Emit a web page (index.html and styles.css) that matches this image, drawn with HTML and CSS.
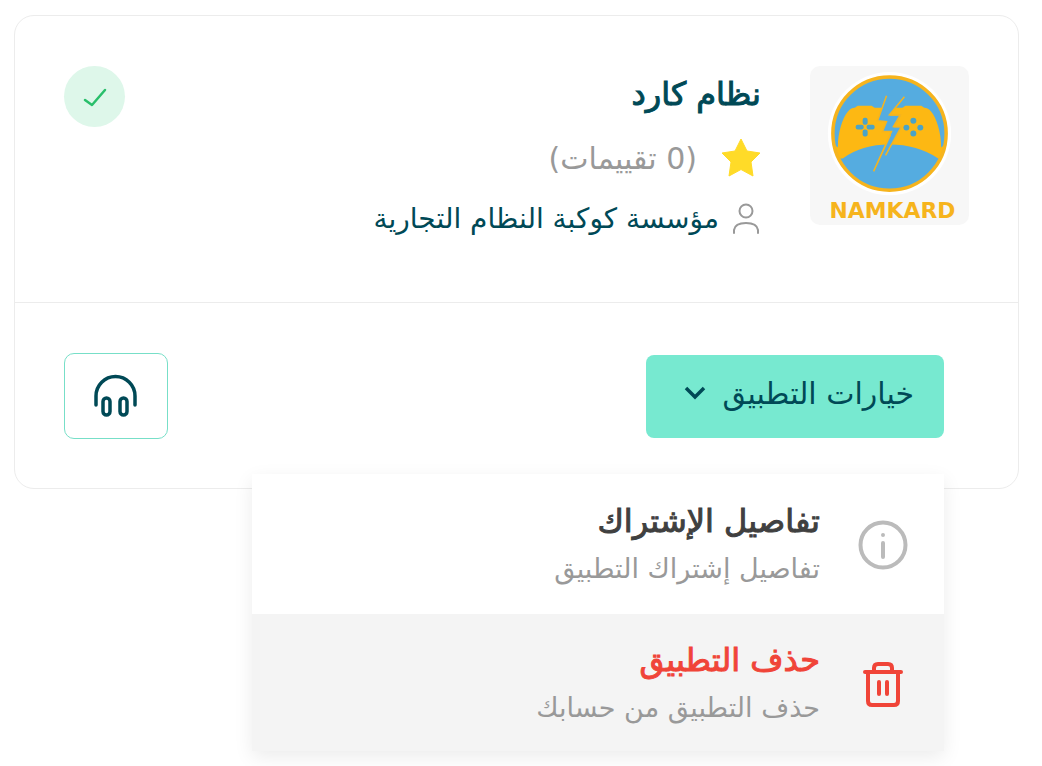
FILE: index.html
```html
<!DOCTYPE html>
<html lang="ar" dir="rtl">
<head>
    <meta charset="UTF-8">
    <meta name="viewport" content="width=device-width, initial-scale=1.0">
    <title>نظام كارد</title>
    <link rel="stylesheet" href="styles.css">
</head>
<body>
    <article class="card">
        <div class="card-header">
            <svg class="logo" viewBox="0 0 160 160" role="img" aria-label="NAMKARD">
                <rect width="160" height="160" rx="10" fill="#f7f7f7"/>
                <circle cx="80" cy="68" r="62" fill="#fff"/>
                <circle cx="80" cy="68" r="57" fill="#55ace0"/>
                <!-- controller -->
                <path d="M28 82C28 66 33 52 38 46Q41 42 45 42L48 40H62L65 42H93L96 40H112L115 42Q119 42 122 46C127 52 132 66 132 82L137 78L132 93H129Q108 79 80 79T33 93H29L23 78Z" fill="#fdb813"/>
                <circle cx="80" cy="68" r="57" fill="none" stroke="#f6b41d" stroke-width="3.5"/>
                <!-- lightning -->
                <path d="M77 30L68 55L77 56L73 66H82L64 106L76 90L92 62H84L91 50H80L90 36L84 30Z" fill="#55ace0"/>
                <path d="M77 30L68 55L77 56L73 66H82L64 106L81 69M95 31L80 49H91L84 61H92L76 90" fill="none" stroke="#f6b41d" stroke-width="1.5"/>
                <g fill="#4ba3c7">
                    <rect x="53" y="52" width="5" height="7" rx="2"/>
                    <rect x="53" y="64" width="5" height="7" rx="2"/>
                    <rect x="46" y="59" width="8" height="5" rx="2"/>
                    <rect x="57" y="59" width="8" height="5" rx="2"/>
                    <circle cx="104" cy="55" r="3"/>
                    <circle cx="104" cy="68" r="3"/>
                    <circle cx="97" cy="62" r="3"/>
                    <circle cx="111" cy="62" r="3"/>
                </g>
                <text class="logo-text" x="83" y="153" direction="ltr" text-anchor="middle">NAMKARD</text>
            </svg>
            <div class="info">
                <h1 class="title">نظام كارد</h1>
                <div class="rating">
                    <svg width="40" height="40" viewBox="0 0 40 40" aria-hidden="true">
                        <path d="M20 1L26 13L39 15L30 24L32 38L20 31.5L8 38L10 24L1 15L14 13Z" fill="#ffdb28" stroke="#ffdb28" stroke-linejoin="round"/>
                    </svg>
                    <span>(0 تقييمات)</span>
                </div>
                <div class="owner">
                    <svg width="28" height="32" viewBox="0 0 28 32" fill="none" stroke="#999" stroke-width="2" stroke-linecap="round" aria-hidden="true">
                        <circle cx="13" cy="9" r="6.5"/>
                        <path d="M1 31V28Q2 21 13 21T25 28V31"/>
                    </svg>
                    <a href="#">مؤسسة كوكبة النظام التجارية</a>
                </div>
            </div>
            <span class="status">
                <svg width="24" height="24" viewBox="0 0 24 24" fill="none" stroke="#29bf6b" stroke-width="2.5" stroke-linecap="round" stroke-linejoin="round" aria-hidden="true">
                    <path d="M2 15L9 20L22 5"/>
                </svg>
            </span>
        </div>
        <div class="card-footer">
            <div class="dropdown">
                <button type="button" class="btn-options" aria-expanded="true">
                    <span>خيارات التطبيق</span>
                    <svg width="22" height="14" viewBox="0 0 22 14" fill="none" stroke="#004956" stroke-width="3.5" aria-hidden="true">
                        <path d="M2 2L11 11L20 2"/>
                    </svg>
                </button>
                <div class="menu">
                    <button type="button" class="menu-item">
                        <svg width="50" height="50" viewBox="0 0 50 50" fill="none" stroke="#bbb" stroke-width="4" stroke-linecap="round" aria-hidden="true">
                            <circle cx="25" cy="25" r="22.5"/>
                            <path d="M25 23V37M25 15V15.1"/>
                        </svg>
                        <span class="menu-text">
                            <strong>تفاصيل الإشتراك</strong>
                            <small>تفاصيل إشتراك التطبيق</small>
                        </span>
                    </button>
                    <button type="button" class="menu-item menu-item-danger">
                        <svg width="50" height="50" viewBox="0 0 50 50" fill="none" stroke="#f04438" stroke-width="4" stroke-linecap="round" stroke-linejoin="round" aria-hidden="true">
                            <path d="M7 13H43M10 13V42Q10 46 14 46H36Q40 46 40 42V13M16 13V9Q16 5 20 5H30Q34 5 34 9V13M21 23V35M29 23V35"/>
                        </svg>
                        <span class="menu-text">
                            <strong>حذف التطبيق</strong>
                            <small>حذف التطبيق من حسابك</small>
                        </span>
                    </button>
                </div>
            </div>
            <button type="button" class="btn-support" aria-label="الدعم الفني">
                <svg width="44" height="44" viewBox="0 0 44 44" fill="none" stroke="#004956" stroke-width="3.5" stroke-linecap="round" aria-hidden="true">
                    <path d="M2 31V22A19.5 19.5 0 0 1 41 22V31"/>
                    <rect x="9" y="24" width="7" height="17" rx="3.5"/>
                    <rect x="26" y="24" width="7" height="17" rx="3.5"/>
                </svg>
            </button>
        </div>
    </article>
</body>
</html>
```
FILE: styles.css
```css
* {
    box-sizing: border-box;
}
body {
    min-height: 100vh;
    margin: 0;
    padding: 15px 23px 0 14px;
    font-family: "DejaVu Sans", sans-serif;
    color: #004956;
    background-color: #fff;
}
button {
    font-family: inherit;
    cursor: pointer;
}
svg {
    display: block;
    flex-shrink: 0;
}
.card {
    border: 1px solid #ececec;
    border-radius: 20px;
}
.card-header {
    display: flex;
    align-items: flex-start;
    gap: 49px;
    padding: 50px 49px 68px;
    border-bottom: 1px solid #ececec;
}
.logo {
    width: 159px;
    height: 159px;
}
.logo-text {
    font-size: 22px;
    font-weight: bold;
    fill: #f6b41d;
}
.info {
    flex: 1;
}
.title {
    margin: 0 0 16px;
    font-size: 32px;
    font-weight: normal;
    line-height: 56px;
    -webkit-text-stroke: 1px;
}
.rating {
    display: flex;
    align-items: center;
    gap: 24px;
    height: 40px;
    margin-bottom: 24px;
    font-size: 30px;
    color: #999;
}
.owner {
    display: flex;
    align-items: center;
    gap: 14px;
    height: 32px;
    font-size: 28px;
}
.owner a {
    color: inherit;
    text-decoration: none;
}
.status {
    display: flex;
    align-items: center;
    justify-content: center;
    width: 61px;
    height: 61px;
    border-radius: 50%;
    background-color: #def7ea;
}
.card-footer {
    display: flex;
    align-items: center;
    justify-content: space-between;
    padding: 50px 49px 49px;
}
.dropdown {
    position: relative;
    margin-right: 25px;
}
.btn-options {
    display: flex;
    align-items: center;
    gap: 16px;
    height: 83px;
    padding: 0 30px 6px 38px;
    border: none;
    border-radius: 8px;
    background-color: #77e9d0;
    color: #004956;
    font-size: 30px;
}
.menu {
    position: absolute;
    top: 119px;
    right: 0;
    width: 692px;
    background-color: #fff;
    box-shadow: 0 6px 18px rgba(0, 0, 0, 0.08);
}
.menu-item {
    display: flex;
    align-items: center;
    gap: 38px;
    width: 100%;
    height: 140px;
    padding: 2px 36px 0;
    border: none;
    background-color: #fff;
    text-align: right;
    color: #404040;
}
.menu-item-danger {
    height: 137px;
    padding-top: 4px;
    background-color: #f4f4f4;
    color: #f04438;
}
.menu-text strong,
.menu-text small {
    display: block;
    line-height: 48px;
}
.menu-text strong {
    font-size: 32px;
    font-weight: normal;
    -webkit-text-stroke: 1px;
}
.menu-text small {
    font-size: 27px;
    color: #999;
}
.btn-support {
    display: flex;
    align-items: center;
    justify-content: center;
    width: 104px;
    height: 86px;
    border: 1px solid #77dfc8;
    border-radius: 10px;
    background-color: #fff;
}
```
